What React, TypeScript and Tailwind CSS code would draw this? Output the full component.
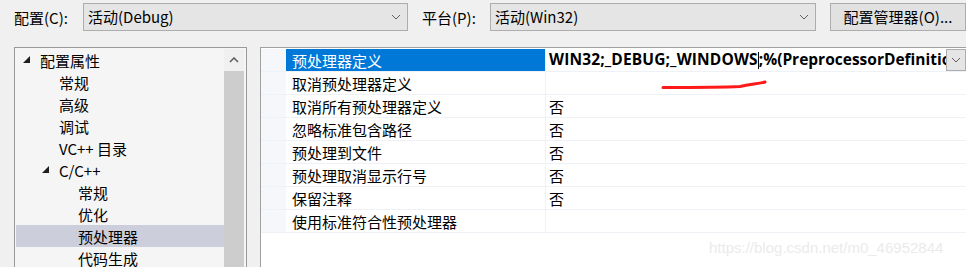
import React from "react";

const font = { fontFamily: '"Noto Sans CJK SC", "Noto Sans", sans-serif' };
const bold = { fontFamily: '"Open Sans", "Noto Sans", sans-serif' };

function Chevron({ className = "" }: { className?: string }) {
  return (
    <svg width="10" height="6" viewBox="0 0 10 6" className={className}>
      <path d="M1 1 L5 5 L9 1" fill="none" stroke="#606060" strokeWidth="1" />
    </svg>
  );
}

function Triangle() {
  return (
    <svg width="8" height="8" viewBox="0 0 8 8" className="shrink-0">
      <polygon points="7,0 7,7 0,7" fill="#1e1e1e" />
    </svg>
  );
}

const tree = [
  { label: "配置属性", level: 0, open: true },
  { label: "常规", level: 1 },
  { label: "高级", level: 1 },
  { label: "调试", level: 1 },
  { label: "VC++ 目录", level: 1 },
  { label: "C/C++", level: 1, open: true },
  { label: "常规", level: 2 },
  { label: "优化", level: 2 },
  { label: "预处理器", level: 2, selected: true },
  { label: "代码生成", level: 2 },
];

const props = [
  { name: "预处理器定义", value: "", selected: true },
  { name: "取消预处理器定义", value: "" },
  { name: "取消所有预处理器定义", value: "否" },
  { name: "忽略标准包含路径", value: "否" },
  { name: "预处理到文件", value: "否" },
  { name: "预处理取消显示行号", value: "否" },
  { name: "保留注释", value: "否" },
  { name: "使用标准符合性预处理器", value: "" },
];

export default function App() {
  return (
    <div className="w-[966px] h-[267px] overflow-hidden bg-[#f0f0f0] text-[15px] text-black relative" style={font}>
      {/* Top bar */}
      <div className="flex items-center pt-[3px] h-[31px]">
        <span className="ml-[14px] w-[69px] leading-none">配置(C):</span>
        <div className="w-[325px] h-[28px] bg-[#e5e5e5] border border-[#adadad] flex items-center justify-between pl-[4px] pr-[6px]">
          <span>活动(Debug)</span>
          <Chevron />
        </div>
        <span className="ml-[14px] w-[68px] leading-none">平台(P):</span>
        <div className="w-[326px] h-[28px] bg-[#e5e5e5] border border-[#adadad] flex items-center justify-between pl-[4px] pr-[6px]">
          <span>活动(Win32)</span>
          <Chevron />
        </div>
        <div className="ml-[14px] w-[136px] h-[28px] bg-[#e1e1e1] border border-[#adadad] flex items-center justify-center">
          配置管理器(O)...
        </div>
      </div>

      {/* Panels */}
      <div className="flex mt-[16px] items-start">
        {/* Tree */}
        <div className="ml-[14px] w-[233px] h-[230px] border-l border-t border-r border-[#9a9a9a] bg-[#f5f5f5] flex pt-[1px] pl-[1px]">
          <div className="w-[208px] flex flex-col">
            {tree.map((t, i) => (
              <div
                key={i}
                className={`h-[22px] flex items-center ${t.selected ? "bg-[#cccedb]" : ""}`}
                style={{ paddingLeft: 7 + t.level * 19 }}
              >
                <span className="w-[17px] flex items-center">{t.open ? <Triangle /> : null}</span>
                <span className="leading-none">{t.label}</span>
              </div>
            ))}
          </div>
          <div className="w-[20px] flex flex-col bg-[#f0f0f0]">
            <div className="h-[22px] flex items-center justify-center">
              <svg width="10" height="6" viewBox="0 0 10 6">
                <path d="M1 5 L5 1 L9 5" fill="none" stroke="#606060" strokeWidth="1.6" />
              </svg>
            </div>
            <div className="flex-1 bg-[#cdcdcd]" />
          </div>
        </div>

        {/* Property grid */}
        <div className="ml-[13px] flex-1 min-w-0 h-[230px] border-l border-t border-[#a0a0a0] bg-white pt-[1px]">
          {props.map((p, i) => (
            <div key={i} className="flex h-[23px] border-b border-[#eef1f6]">
              <div className="w-[25px] bg-[#f5f7fb]" />
              <div
                className={`w-[260px] flex items-center pl-[6px] border-r border-[#eef1f6] ${p.selected ? "bg-[#0078d7] text-white" : ""}`}
              >
                <span className="leading-none">{p.name}</span>
              </div>
              <div className="flex-1 min-w-0 flex items-center pl-[3px] whitespace-nowrap">
                {p.selected ? (
                  <>
                    <div className="flex-1 min-w-0 flex items-center">
                      <span className="shrink-0 font-bold leading-none text-[15.5px] tracking-[0.15px]" style={bold}>
                        WIN32;_DEBUG;_WINDOWS
                      </span>
                      <span className="inline-block w-px h-[17px] bg-black shrink-0" />
                      <span className="shrink-0 font-bold leading-none text-[15.5px]" style={bold}>
                        ;%(PreprocessorDefinitio
                      </span>
                    </div>
                    <div className="w-[20px] h-[22px] shrink-0 bg-[#e5e5e5] border border-[#adadad] flex items-center justify-center">
                      <Chevron />
                    </div>
                  </>
                ) : (
                  <span className="leading-none">{p.value}</span>
                )}
              </div>
            </div>
          ))}
        </div>
      </div>

      {/* Red annotation stroke */}
      <svg className="absolute left-0 top-0 pointer-events-none" width="966" height="267">
        <path d="M663 87.5 C 690 87.5, 720 87.5, 740 86.5 C 750 84, 758 84, 765 82" fill="none" stroke="#ff1a1a" strokeWidth="3" strokeLinecap="round" />
      </svg>

      {/* Watermark */}
      <div className="absolute left-[709px] top-[240px] text-[15px] text-[#ebebeb] leading-none" style={{ fontFamily: '"Liberation Sans", sans-serif' }}>
        https://blog.csdn.net/m0_46952844
      </div>
    </div>
  );
}
